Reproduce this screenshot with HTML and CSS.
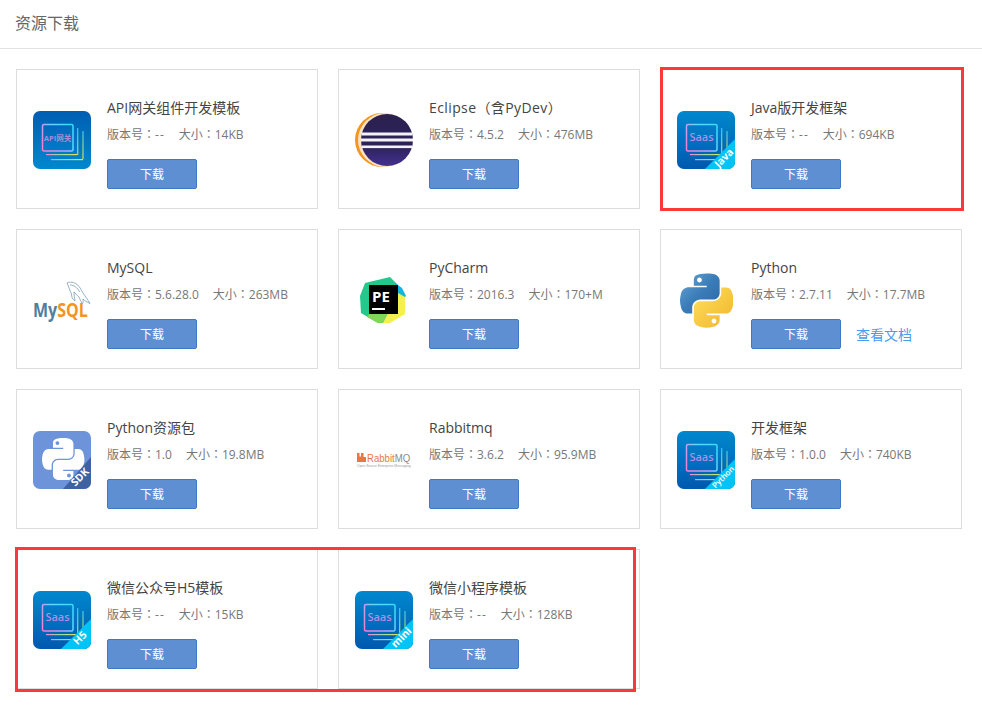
FILE: index.html
```html
<!DOCTYPE html>
<html>
<head>
  <meta charset="UTF-8" />
  <title>资源下载</title>
  <link rel="stylesheet" href="styles.css">
</head>
<body>
  <!-- shared icon parts -->
  <svg class="defs" width="0" height="0" aria-hidden="true">
    <defs>
      <linearGradient id="blueDown" x1="0" y1="0" x2="0" y2="1">
        <stop offset="0" stop-color="#0088cf"/><stop offset="1" stop-color="#0059ae"/>
      </linearGradient>
      <linearGradient id="blueUp" x1="0" y1="0" x2="0" y2="1">
        <stop offset="0" stop-color="#005eb2"/><stop offset="1" stop-color="#0088cf"/>
      </linearGradient>
      <linearGradient id="frame" gradientUnits="userSpaceOnUse" x1="9" y1="40" x2="40" y2="13">
        <stop offset="0" stop-color="#ff78cc"/><stop offset="0.45" stop-color="#b4a8f4"/><stop offset="0.6" stop-color="#60d8fa"/><stop offset="1" stop-color="#35dcfa"/>
      </linearGradient>
      <linearGradient id="lineH" x1="0" y1="0" x2="1" y2="0">
        <stop offset="0" stop-color="#f28ad0"/><stop offset="0.5" stop-color="#8fe0a0"/><stop offset="1" stop-color="#e8e050"/>
      </linearGradient>
      <linearGradient id="lineV" gradientUnits="userSpaceOnUse" x1="0" y1="17" x2="0" y2="48">
        <stop offset="0" stop-color="#35c8f0"/><stop offset="1" stop-color="#d8e040"/>
      </linearGradient>
      <linearGradient id="pyBlue" x1="0" y1="0" x2="1" y2="1">
        <stop offset="0" stop-color="#6aa8d8"/><stop offset="0.5" stop-color="#3a7cb8"/><stop offset="1" stop-color="#2a66a4"/>
      </linearGradient>
      <linearGradient id="pyYellow" x1="0" y1="0" x2="1" y2="1">
        <stop offset="0" stop-color="#ffe060"/><stop offset="1" stop-color="#f0b428"/>
      </linearGradient>
      <linearGradient id="eclipseBody" x1="0" y1="0" x2="0" y2="1">
        <stop offset="0" stop-color="#2a2150"/><stop offset="0.6" stop-color="#2c2258"/><stop offset="1" stop-color="#443090"/>
      </linearGradient>
      <clipPath id="round"><rect width="58" height="58" rx="7"/></clipPath>
      <symbol id="stack" viewBox="0 0 58 58">
        <rect x="9.5" y="13.5" width="30.5" height="26.5" rx="1.5" fill="none" stroke="url(#frame)" stroke-width="1.5"/>
        <path d="M44.7 17V44" stroke="url(#lineV)" stroke-width="1.2"/>
        <path d="M50 20V48" stroke="url(#lineV)" stroke-width="1.2"/>
        <rect x="13" y="43" width="31" height="1.2" fill="url(#lineH)"/>
        <rect x="18" y="48" width="32" height="1.2" fill="url(#lineH)"/>
      </symbol>
      <symbol id="pyBack" viewBox="0 0 110 110">
        <path d="M54.9 0C50.3 0 46 .4 42.1 1.1 30.7 3.1 28.7 7.3 28.7 15.1v10.2h26.8v3.4H18.6c-7.8 0-14.6 4.7-16.7 13.6-2.5 10.2-2.6 16.6 0 27.2 1.9 8 6.5 13.6 14.2 13.6h9.2V70.9c0-8.9 7.7-16.7 16.8-16.7h26.8c7.4 0 13.4-6.1 13.4-13.6V15.1c0-7.3-6.1-12.7-13.4-14C64.3.3 59.5 0 54.9 0zM40.4 8.2c2.8 0 5 2.3 5 5.2 0 2.8-2.2 5.1-5 5.1s-5-2.3-5-5.1c0-2.9 2.2-5.2 5-5.2z"/>
      </symbol>
      <symbol id="pyFront" viewBox="0 0 110 110">
        <path d="M85.6 28.7v11.9c0 9.2-7.8 17-16.7 17H42.1c-7.3 0-13.4 6.3-13.4 13.6v25.6c0 7.3 6.3 11.5 13.4 13.6 8.5 2.5 16.6 3 26.8 0 6.7-2 13.4-5.9 13.4-13.6V86.6H55.5v-3.4h40.2c7.8 0 10.7-5.4 13.4-13.6 2.8-8.4 2.7-16.5 0-27.2-1.9-7.8-5.6-13.6-13.4-13.6H85.6zM70.6 93.3c2.8 0 5 2.3 5 5.1 0 2.9-2.2 5.2-5 5.2s-5-2.3-5-5.2c0-2.8 2.2-5.1 5-5.1z"/>
      </symbol>
    </defs>
  </svg>

  <div class="page">
    <header class="page-head">资源下载</header>

    <div class="res-list">
      <div class="res-card">
        <svg class="res-icon" viewBox="0 0 58 58">
          <g clip-path="url(#round)">
            <rect width="58" height="58" fill="url(#blueUp)"/>
            <use href="#stack" width="58" height="58"/>
          </g>
          <text class="icon-label api" x="24.5" y="29.5">API网关</text>
        </svg>
        <div class="res-info">
          <div class="res-title">API网关组件开发模板</div>
          <div class="res-meta"><span>版本号：<i class="no-version">--</i></span><span>大小：14KB</span></div>
          <div class="res-actions"><a class="btn">下载</a></div>
        </div>
      </div>

      <div class="res-card">
        <svg class="res-icon" viewBox="0 0 58 58">
          <circle cx="27" cy="29" r="27" fill="#f7941e"/>
          <circle cx="30" cy="29" r="27" fill="#fbe3c4"/>
          <circle cx="32" cy="29" r="26" fill="url(#eclipseBody)"/>
          <rect x="6.5" y="21.5" width="51" height="3" fill="#f4f2f8"/>
          <rect x="6" y="27.5" width="52" height="3" fill="#f4f2f8"/>
          <rect x="7" y="34.5" width="50" height="2.6" fill="#f4f2f8"/>
        </svg>
        <div class="res-info">
          <div class="res-title res-title-tc">Eclipse（含PyDev）</div>
          <div class="res-meta"><span>版本号：4.5.2</span><span>大小：476MB</span></div>
          <div class="res-actions"><a class="btn">下载</a></div>
        </div>
      </div>

      <div class="res-card">
        <svg class="res-icon" viewBox="0 0 58 58">
          <g clip-path="url(#round)">
            <rect width="58" height="58" fill="url(#blueDown)"/>
            <use href="#stack" width="58" height="58"/>
            <path d="M28 58 58 28V58Z" fill="#00c4f6"/>
          </g>
          <text class="icon-label saas" x="24.5" y="29.5">Saas</text>
          <text class="ribbon-label" transform="translate(47 47) rotate(-45)" y="3.5">Java</text>
        </svg>
        <div class="res-info">
          <div class="res-title">Java版开发框架</div>
          <div class="res-meta"><span>版本号：<i class="no-version">--</i></span><span>大小：694KB</span></div>
          <div class="res-actions"><a class="btn">下载</a></div>
        </div>
      </div>

      <div class="res-card">
        <svg class="res-icon" viewBox="0 0 58 58">
          <path class="dolphin" d="M34 12C37 10.500 41 11 44 13.500 47 15.500 48 19 50 22 52 25 55 29 57 32.500 54 31 52 30 50 28 50.500 30 50 31.500 49.500 33 48 31 47 28 46 26 44 24 42.500 23 41 21 41 23.500 41.500 27 42 30 39.500 28.500 38.500 26 38.500 23 37 20 36 16 34 12Z"/>
          <path class="dolphin" d="M37 14C41 14 45 17 46.500 21"/>
          <text class="mysql" transform="translate(0 46) scale(1 1.2)"><tspan class="mysql-my">My</tspan><tspan class="mysql-sql">SQL</tspan></text>
        </svg>
        <div class="res-info">
          <div class="res-title">MySQL</div>
          <div class="res-meta"><span>版本号：5.6.28.0</span><span>大小：263MB</span></div>
          <div class="res-actions"><a class="btn">下载</a></div>
        </div>
      </div>

      <div class="res-card">
        <svg class="res-icon" viewBox="0 0 58 58">
          <path d="M10 12 35 6 43 14V45L30 52H23L6 42 5 25Z" fill="#25c78c"/>
          <path d="M14 43H32L28 52H23L12 46Z" fill="#7fd65a"/>
          <path d="M40 12 47 17 51 25 46 30 40 25Z" fill="#12b5e0"/>
          <path d="M43 22 50 26V43L35 52H28Z" fill="#f5f04f"/>
          <rect x="14" y="14" width="29" height="29" fill="#000"/>
          <text class="pe" x="17" y="30.500">PE</text>
          <rect x="17" y="37" width="13" height="2" fill="#fff"/>
        </svg>
        <div class="res-info">
          <div class="res-title">PyCharm</div>
          <div class="res-meta"><span>版本号：2016.3</span><span>大小：170+M</span></div>
          <div class="res-actions"><a class="btn">下载</a></div>
        </div>
      </div>

      <div class="res-card">
        <svg class="res-icon" viewBox="0 0 58 58">
          <use href="#pyBack" x="3" y="1" width="53" height="56" fill="url(#pyBlue)"/>
          <use href="#pyFront" x="3" y="1" width="53" height="56" fill="url(#pyYellow)"/>
        </svg>
        <div class="res-info">
          <div class="res-title">Python</div>
          <div class="res-meta"><span>版本号：2.7.11</span><span>大小：17.7MB</span></div>
          <div class="res-actions"><a class="btn">下载</a><a class="doc-link">查看文档</a></div>
        </div>
      </div>

      <div class="res-card">
        <svg class="res-icon" viewBox="0 0 58 58">
          <g clip-path="url(#round)">
            <rect width="58" height="58" fill="#6d94d8"/>
            <use href="#pyBack" x="8" y="7" width="44" height="42" fill="#fff"/>
            <use href="#pyFront" x="8" y="7" width="44" height="42" fill="#fff"/>
            <path d="M30 58 58 26V58Z" fill="#3f62a3"/>
          </g>
          <text class="ribbon-label" transform="translate(47 46) rotate(-45)" y="3.5">SDK</text>
        </svg>
        <div class="res-info">
          <div class="res-title">Python资源包</div>
          <div class="res-meta"><span>版本号：1.0</span><span>大小：19.8MB</span></div>
          <div class="res-actions"><a class="btn">下载</a></div>
        </div>
      </div>

      <div class="res-card">
        <svg class="res-icon" viewBox="0 0 58 58">
          <path d="M2 22h2.500v3.500h1.500V22h2.500v4H11v5H2Z" fill="#e8793e"/>
          <text class="rabbit" transform="translate(12 31) scale(1 1.12)"><tspan class="rabbit-name">Rabbit</tspan><tspan class="rabbit-mq">MQ</tspan></text>
          <text class="rabbit-tag" x="2" y="35.500">Open Source Enterprise Messaging</text>
        </svg>
        <div class="res-info">
          <div class="res-title">Rabbitmq</div>
          <div class="res-meta"><span>版本号：3.6.2</span><span>大小：95.9MB</span></div>
          <div class="res-actions"><a class="btn">下载</a></div>
        </div>
      </div>

      <div class="res-card">
        <svg class="res-icon" viewBox="0 0 58 58">
          <g clip-path="url(#round)">
            <rect width="58" height="58" fill="url(#blueDown)"/>
            <use href="#stack" width="58" height="58"/>
            <path d="M28 58 58 28V58Z" fill="#00c4f6"/>
          </g>
          <text class="icon-label saas" x="24.5" y="29.5">Saas</text>
          <text class="ribbon-label small" transform="translate(46 46) rotate(-45)" y="3">Python</text>
        </svg>
        <div class="res-info">
          <div class="res-title">开发框架</div>
          <div class="res-meta"><span>版本号：1.0.0</span><span>大小：740KB</span></div>
          <div class="res-actions"><a class="btn">下载</a></div>
        </div>
      </div>

      <div class="res-card">
        <svg class="res-icon" viewBox="0 0 58 58">
          <g clip-path="url(#round)">
            <rect width="58" height="58" fill="url(#blueDown)"/>
            <use href="#stack" width="58" height="58"/>
            <path d="M28 58 58 28V58Z" fill="#00c4f6"/>
          </g>
          <text class="icon-label saas" x="24.5" y="29.5">Saas</text>
          <text class="ribbon-label" transform="translate(47 47) rotate(-45)" y="3.5">H5</text>
        </svg>
        <div class="res-info">
          <div class="res-title">微信公众号H5模板</div>
          <div class="res-meta"><span>版本号：<i class="no-version">--</i></span><span>大小：15KB</span></div>
          <div class="res-actions"><a class="btn">下载</a></div>
        </div>
      </div>

      <div class="res-card">
        <svg class="res-icon" viewBox="0 0 58 58">
          <g clip-path="url(#round)">
            <rect width="58" height="58" fill="url(#blueDown)"/>
            <use href="#stack" width="58" height="58"/>
            <path d="M28 58 58 28V58Z" fill="#00c4f6"/>
          </g>
          <text class="icon-label saas" x="24.5" y="29.5">Saas</text>
          <text class="ribbon-label" transform="translate(46.5 46.5) rotate(-45)" y="3.5">mini</text>
        </svg>
        <div class="res-info">
          <div class="res-title">微信小程序模板</div>
          <div class="res-meta"><span>版本号：<i class="no-version">--</i></span><span>大小：128KB</span></div>
          <div class="res-actions"><a class="btn">下载</a></div>
        </div>
      </div>
    </div>

    <!-- red annotation frames drawn over the cards -->
    <div class="mark mark-java"></div>
    <div class="mark mark-wechat"></div>
  </div>
</body>
</html>
```

FILE: styles.css
```css
/* Basic Reset */
* {
  margin: 0;
  padding: 0;
  box-sizing: border-box;
}

body {
  background-color: #fff;
  color: #666;
  font-family: "Open Sans", "Noto Sans CJK SC", sans-serif;
  font-size: 12px;
}

.defs {
  position: absolute;
}

.page {
  position: relative;
  height: 713px;
  overflow: hidden;
}

/* Header */
.page-head {
  height: 49px;
  padding: 10px 15px 0;
  border-bottom: 1px solid #e2e2e2;
  font-size: 16px;
  line-height: 26px;
  color: #666;
}

/* Resource cards */
.res-list {
  display: flex;
  flex-wrap: wrap;
  gap: 20px;
  padding: 20px 16px 0;
}

.res-card {
  display: flex;
  gap: 16px;
  width: 302px;
  height: 140px;
  padding: 25px 16px 0;
  border: 1px solid #ddd;
}

.res-icon {
  flex: none;
  width: 58px;
  height: 58px;
  margin-top: 16px;
}

.res-title {
  height: 26px;
  font-size: 14px;
  line-height: 26px;
  color: #444;
  white-space: nowrap;
}

.res-title-tc {
  font-family: "Open Sans", "Noto Sans CJK TC", sans-serif;
  letter-spacing: 0.4px;
}

/* the TC face keeps the full-width colon centred */
.res-meta {
  display: flex;
  gap: 14px;
  height: 26px;
  font-family: "Open Sans", "Noto Sans CJK TC", sans-serif;
  font-size: 12px;
  line-height: 28px;
  color: #777;
  white-space: nowrap;
}

.no-version {
  font-style: normal;
  letter-spacing: 1px;
}

.res-actions {
  display: flex;
  align-items: center;
  gap: 15px;
  margin-top: 12px;
}

.btn {
  display: block;
  width: 90px;
  height: 30px;
  border: 1px solid #3f78c4;
  border-radius: 2px;
  background-color: #5f8fd3;
  color: #fff;
  font-size: 12px;
  line-height: 30px;
  text-align: center;
}

.doc-link {
  color: #4a9bf0;
  font-size: 14px;
}

/* Labels inside the icons */
.icon-label {
  text-anchor: middle;
  font-family: "Open Sans", "Noto Sans CJK SC", sans-serif;
}

.icon-label.saas {
  fill: #b08ce4;
  font-size: 11px;
  font-weight: 600;
}

.icon-label.api {
  fill: #a88ad8;
  font-size: 7.5px;
  font-weight: 700;
}

.ribbon-label {
  fill: #fff;
  font-family: "Open Sans", sans-serif;
  font-size: 10.5px;
  font-weight: 700;
  text-anchor: middle;
}

.ribbon-label.small {
  font-size: 8px;
  font-weight: 600;
}

.dolphin {
  fill: none;
  stroke: #7a9db5;
  stroke-width: 0.8;
}

.mysql {
  font-family: "Open Sans", sans-serif;
  font-size: 16px;
  font-weight: 700;
}

.mysql-my {
  fill: #4f7f9e;
}

.mysql-sql {
  fill: #f2941f;
}

.pe {
  fill: #fff;
  font-family: "Open Sans", sans-serif;
  font-size: 15px;
  font-weight: 700;
}

.rabbit {
  font-family: "Liberation Sans", sans-serif;
  font-size: 9.6px;
}

.rabbit-name {
  fill: #e8793e;
}

.rabbit-mq {
  fill: #8a8a8a;
}

.rabbit-tag {
  fill: #999;
  font-family: "Liberation Sans", sans-serif;
  font-size: 3.4px;
}

/* Red annotation frames */
.mark {
  position: absolute;
  border: 3px solid #f83a3a;
}

.mark-java {
  left: 660px;
  top: 67px;
  width: 304px;
  height: 144px;
}

.mark-wechat {
  left: 15px;
  top: 547px;
  width: 621px;
  height: 145px;
}
```
